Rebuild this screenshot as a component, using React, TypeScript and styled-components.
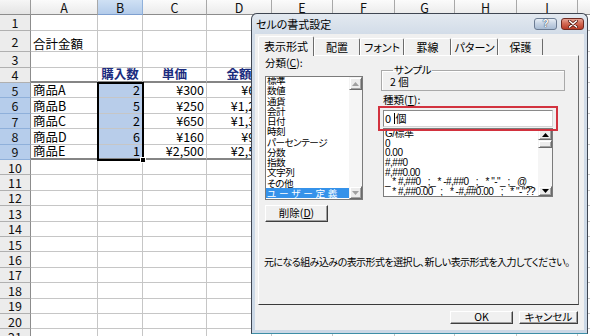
import React from 'react';
import styled, { createGlobalStyle } from 'styled-components';

const GlobalStyle = createGlobalStyle`
  html, body { margin: 0; padding: 0; background: #fff; }
  body { width: 590px; height: 336px; overflow: hidden; font-family: "Noto Sans CJK JP", "Noto Sans", sans-serif; }
`;

const Screen = styled.div`
  position: relative;
  width: 590px;
  height: 336px;
  overflow: hidden;
  background: #fff;
`;

/* ---------------- spreadsheet ---------------- */

const COLS = [31, 67, 45, 64, 65, 61, 62, 60, 62, 61, 60];
const LETTERS = ['A', 'B', 'C', 'D', 'E', 'F', 'G', 'H', 'I', 'J'];

const Sheet = styled.div`
  display: grid;
  grid-template-columns: ${COLS.map((c) => `${c}px`).join(' ')};
  grid-template-rows: 15.4px 15.4px 21.5px repeat(19, 15.4px);
  font-family: "Noto Sans CJK JP", sans-serif;
`;

const Corner = styled.div`
  grid-row: 1;
  grid-column: 1;
  box-sizing: border-box;
  border-right: 1px solid #9a9a9a;
  border-bottom: 1px solid #8c8c8c;
  background: linear-gradient(#f6f6f6, #e4e4e4);
`;

const ColHead = styled.div<{ $c: number; $active?: boolean }>`
  grid-row: 1;
  grid-column: ${(p) => p.$c + 1};
  box-sizing: border-box;
  display: flex;
  align-items: center;
  justify-content: center;
  border-right: 1px solid ${(p) => (p.$active ? '#8fb0da' : '#a8a8a8')};
  border-bottom: 1px solid ${(p) => (p.$active ? '#7e9fcf' : '#8c8c8c')};
  background: ${(p) => (p.$active ? 'linear-gradient(#cfe0f4, #b3cbea)' : 'linear-gradient(#fbfbfb, #ebebeb)')};
  font-size: 12.5px;
  line-height: 13px;
  color: #111;
`;

const RowHead = styled.div<{ $r: number; $active?: boolean }>`
  grid-row: ${(p) => p.$r + 1};
  grid-column: 1;
  box-sizing: border-box;
  display: flex;
  align-items: center;
  justify-content: center;
  border-right: 1px solid #8c8c8c;
  border-bottom: 1px solid ${(p) => (p.$active ? '#8fb0da' : '#b0b0b0')};
  background: ${(p) => (p.$active ? '#b6cdeb' : '#ececec')};
  font-size: 12.5px;
  line-height: 13px;
  color: #111;
`;

type Align = 'left' | 'right' | 'center';

const Cell = styled.div<{ $r: number; $c: number; $align?: Align; $head?: boolean; $fill?: boolean; $rule?: boolean }>`
  grid-row: ${(p) => p.$r + 1};
  grid-column: ${(p) => p.$c + 1};
  box-sizing: border-box;
  min-width: 0;
  display: flex;
  align-items: flex-end;
  justify-content: ${(p) => (p.$align === 'right' ? 'flex-end' : p.$align === 'center' ? 'center' : 'flex-start')};
  padding: 0 2px;
  border-right: 1px solid #c6c6c6;
  border-bottom: ${(p) => (p.$rule ? '2px solid #858585' : '1px solid #c6c6c6')};
  background: ${(p) => (p.$fill ? '#b8cdea' : '#fff')};
  font-size: 12.5px;
  line-height: 14px;
  white-space: nowrap;
  overflow: hidden;
  color: ${(p) => (p.$head ? '#1b2c7e' : '#000')};
  font-weight: ${(p) => (p.$head ? 700 : 400)};
`;

const Selection = styled.div`
  grid-row: 6 / 11;
  grid-column: 3;
  margin: -1px;
  border: 2px solid #000;
  position: relative;
  z-index: 1;
  pointer-events: none;
  &::after {
    content: '';
    position: absolute;
    right: -4px;
    bottom: -4px;
    width: 4px;
    height: 4px;
    background: #000;
    border: 1px solid #fff;
  }
`;

type CellData = { text: string; align?: Align; head?: boolean };

const DATA: Record<string, CellData> = {
  '2-1': { text: '合計金額' },
  '4-2': { text: '購入数', align: 'center', head: true },
  '4-3': { text: '単価', align: 'center', head: true },
  '4-4': { text: '金額', align: 'center', head: true },
};

const ROWS = [
  ['商品A', '2', '¥300', '¥600'],
  ['商品B', '5', '¥250', '¥1,250'],
  ['商品C', '2', '¥650', '¥1,300'],
  ['商品D', '6', '¥160', '¥960'],
  ['商品E', '1', '¥2,500', '¥2,500'],
];
ROWS.forEach((row, i) => {
  const r = 5 + i;
  DATA[`${r}-1`] = { text: row[0] };
  DATA[`${r}-2`] = { text: row[1], align: 'right' };
  DATA[`${r}-3`] = { text: row[2], align: 'right' };
  DATA[`${r}-4`] = { text: row[3], align: 'right' };
});

function Spreadsheet() {
  const cells: React.ReactNode[] = [];
  for (let r = 1; r <= 21; r++) {
    const activeRow = r >= 5 && r <= 9;
    cells.push(
      <RowHead key={`h${r}`} $r={r} $active={activeRow}>
        {r}
      </RowHead>
    );
    for (let c = 1; c <= 10; c++) {
      const d = DATA[`${r}-${c}`];
      cells.push(
        <Cell
          key={`${r}-${c}`}
          $r={r}
          $c={c}
          $align={d?.align}
          $head={d?.head}
          $fill={c === 2 && activeRow}
          $rule={(r === 4 || r === 9) && c <= 4}
        >
          {d?.text}
        </Cell>
      );
    }
  }
  return (
    <Sheet>
      <Corner />
      {LETTERS.map((l, i) => (
        <ColHead key={l} $c={i + 1} $active={l === 'B'}>
          {l}
        </ColHead>
      ))}
      {cells}
      <Selection />
    </Sheet>
  );
}

/* ---------------- dialog ---------------- */

const Dialog = styled.section`
  position: absolute;
  left: 251px;
  top: 13px;
  width: 337px;
  height: 321px;
  box-sizing: border-box;
  border: 1px solid #3f4652;
  border-bottom-color: #3d8ea6;
  border-radius: 6px 6px 0 0;
  background: linear-gradient(#e3e9f0 0, #d2dce8 20px, #cbd8e6 100%);
  display: flex;
  flex-direction: column;
  font-family: "Noto Sans CJK JP", sans-serif;
  font-feature-settings: "palt";
  color: #000;
  z-index: 5;
`;

const TitleBar = styled.header`
  height: 20px;
  flex: none;
  display: flex;
  align-items: flex-start;
  padding: 0 3px 0 4px;
`;

const Title = styled.h1`
  margin: 0;
  font-size: 11px;
  font-weight: 400;
  line-height: 20px;
  color: #000;
`;

const CaptionButtons = styled.div`
  margin-left: auto;
  margin-top: 4px;
  display: flex;
  gap: 4px;
`;

const CaptionButton = styled.div<{ $close?: boolean }>`
  width: 23px;
  height: 12px;
  box-sizing: border-box;
  border: 1px solid ${(p) => (p.$close ? '#6e2a22' : '#6c7c93')};
  border-radius: 3px;
  background: ${(p) =>
    p.$close ? 'linear-gradient(#e7a293, #d26a55 45%, #b83a26)' : 'linear-gradient(#e9eff6, #c7d4e4 45%, #a9bcd4)'};
  display: flex;
  align-items: center;
  justify-content: center;
  font-family: "Liberation Sans", sans-serif;
  font-weight: 700;
  font-size: 10px;
  line-height: 1;
  color: #fff;
  text-shadow: 0 0 1px #2b3a55, 0 0 1px #2b3a55;
`;

const Body = styled.div`
  flex: 1;
  margin: 0 3px 3px;
  background: #f0f0f0;
  padding: 3px 5px 0 3px;
  display: flex;
  flex-direction: column;
`;

const TabStrip = styled.div`
  height: 18px;
  display: flex;
  align-items: flex-end;
  position: relative;
  z-index: 2;
`;

const Tab = styled.div<{ $w: number; $active?: boolean }>`
  width: ${(p) => p.$w}px;
  height: ${(p) => (p.$active ? 20 : 17)}px;
  margin-bottom: ${(p) => (p.$active ? -1 : 0)}px;
  box-sizing: border-box;
  border-style: solid;
  border-width: 1px 1px 0 1px;
  border-color: #fff #6b6b6b transparent #fff;
  border-radius: 2px 2px 0 0;
  background: #f0f0f0;
  display: flex;
  align-items: center;
  justify-content: center;
  font-size: 11px;
  line-height: 1;
  white-space: nowrap;
`;

const Panel = styled.div`
  height: 250px;
  box-sizing: border-box;
  border-style: solid;
  border-width: 1px;
  border-color: #fff #6b6b6b #3a3a3a #fff;
  padding: 0 12px 0 6px;
  display: flex;
  flex-direction: column;
`;

const TopArea = styled.div`
  display: flex;
  gap: 18px;
`;

const LeftCol = styled.div`
  width: 98px;
  display: flex;
  flex-direction: column;
  align-items: flex-start;
`;

const RightCol = styled.div`
  width: 184px;
  display: flex;
  flex-direction: column;
  align-items: flex-start;
`;

const FieldLabel = styled.div<{ $mt: number; $ml?: number }>`
  margin-top: ${(p) => p.$mt}px;
  margin-left: ${(p) => p.$ml ?? 0}px;
  font-size: 10.5px;
  line-height: 12px;
  height: 12px;
  white-space: nowrap;
  u { text-decoration: underline; text-underline-offset: 1px; }
`;

const ListBox = styled.div<{ $w: number; $h: number; $mt: number; $ml?: number }>`
  width: ${(p) => p.$w}px;
  height: ${(p) => p.$h}px;
  margin-top: ${(p) => p.$mt}px;
  margin-left: ${(p) => p.$ml ?? 0}px;
  box-sizing: border-box;
  border: 1px solid #7b7b7b;
  background: #fff;
  display: flex;
  overflow: hidden;
`;

const ListItems = styled.ul<{ $shift: number; $latin?: boolean }>`
  flex: 1;
  min-width: 0;
  margin: ${(p) => p.$shift}px 0 0;
  padding: 0;
  list-style: none;
  overflow: hidden;
  font-family: ${(p) => (p.$latin ? '"Liberation Sans", "Noto Sans CJK JP", sans-serif' : '"Noto Sans CJK JP", sans-serif')};
`;

const ListItem = styled.li<{ $lh: number; $sel?: boolean; $ls?: number; $latin?: boolean }>`
  height: ${(p) => p.$lh}px;
  line-height: ${(p) => p.$lh}px;
  padding-left: 1px;
  font-size: ${(p) => (p.$latin ? 10 : 9.6)}px;
  letter-spacing: ${(p) => p.$ls ?? (p.$latin ? -0.5 : -0.5)}px;
  white-space: nowrap;
  overflow: visible;
  background: ${(p) => (p.$sel ? '#3592ea' : 'transparent')};
  color: ${(p) => (p.$sel ? '#fff' : '#000')};
`;

const VScroll = styled.div<{ $w: number }>`
  width: ${(p) => p.$w}px;
  flex: none;
  display: flex;
  flex-direction: column;
  background: #f5f5f5;
`;

const ScrollPart = styled.div<{ $h: number }>`
  height: ${(p) => p.$h}px;
  flex: none;
  box-sizing: border-box;
  border: 1px solid;
  border-color: #f4f4f4 #6b6b6b #6b6b6b #f4f4f4;
  box-shadow: inset 1px 1px #fff, inset -1px -1px #a3a3a3;
  background: #ececec;
  display: flex;
  align-items: center;
  justify-content: center;
`;

const Track = styled.div`
  flex: 1;
`;

const Arrow = ({ down, dim }: { down?: boolean; dim?: boolean }) => (
  <svg width="7" height="4" viewBox="0 0 7 4">
    <polygon points={down ? '0,0 7,0 3.5,4' : '0,4 7,4 3.5,0'} fill={dim ? '#a0a0a0' : '#000'} />
  </svg>
);

const PushButton = styled.div<{ $w: number; $h: number; $mt?: number }>`
  width: ${(p) => p.$w}px;
  height: ${(p) => p.$h}px;
  margin-top: ${(p) => p.$mt ?? 0}px;
  box-sizing: border-box;
  border: 1px solid;
  border-color: #fff #3f3f3f #3f3f3f #fff;
  box-shadow: inset -1px -1px #a0a0a0;
  background: #f0f0f0;
  display: flex;
  align-items: center;
  justify-content: center;
  font-size: 10.5px;
  line-height: 1;
  white-space: nowrap;
  u { text-decoration: underline; text-underline-offset: 1px; }
`;

const GroupBox = styled.fieldset`
  margin: 8px 0 0;
  width: 184px;
  box-sizing: border-box;
  padding: 0 0 3px 8px;
  border: 1px solid #a9a9a9;
  box-shadow: inset 1px 1px #fff;
  min-width: 0;
`;

const GroupLegend = styled.legend`
  margin-left: 3px;
  padding: 0 1px;
  font-size: 10.5px;
  line-height: 12px;
  letter-spacing: -0.3px;
`;

const GroupValue = styled.div`
  font-size: 10.5px;
  line-height: 11px;
  height: 11px;
  white-space: pre;
`;

const Highlight = styled.div`
  position: relative;
  z-index: 3;
  margin-left: -3px;
  width: 180px;
  box-sizing: border-box;
  border: 2px solid #d2323e;
  padding: 2px 3px;
`;

const TextInput = styled.div`
  height: 17px;
  box-sizing: border-box;
  border: 1px solid #8a8a8a;
  border-bottom-color: #d6d6d6;
  border-right-color: #d6d6d6;
  background: #fff;
  display: flex;
  align-items: center;
  padding-left: 1px;
  font-size: 11px;
  line-height: 1;
  white-space: pre;
`;

const Caret = styled.span`
  display: inline-block;
  width: 1px;
  height: 11px;
  background: #000;
  margin-right: 1px;
`;

const Description = styled.p`
  margin: 33px 0 0 -1px;
  font-size: 10px;
  line-height: 14px;
  letter-spacing: -0.55px;
  white-space: nowrap;
`;

const Footer = styled.div`
  display: flex;
  justify-content: flex-end;
  gap: 6px;
  padding: 6px 1px 0 0;
`;

const CATEGORIES = ['標準', '数値', '通貨', '会計', '日付', '時刻', 'パーセンテージ', '分数', '指数', '文字列', 'その他', 'ユーザー定義'];
const FORMATS = [
  'G/標準',
  '0',
  '0.00',
  '#,##0',
  '#,##0.00',
  '_ * #,##0_ ;_ * -#,##0_ ;_ * "-"_ ;_ @_',
  '_ * #,##0.00_ ;_ * -#,##0.00_ ;_ * "-"??_ ;_ @_',
];
const TABS: { label: string; w: number }[] = [
  { label: '表示形式', w: 56 },
  { label: '配置', w: 46 },
  { label: 'フォント', w: 44 },
  { label: '罫線', w: 47 },
  { label: 'パターン', w: 47 },
  { label: '保護', w: 45 },
];

function FormatDialog() {
  return (
    <Dialog>
      <TitleBar>
        <Title>セルの書式設定</Title>
        <CaptionButtons>
          <CaptionButton>?</CaptionButton>
          <CaptionButton $close>
            <svg width="10" height="8" viewBox="0 0 10 8">
              <path d="M1.5 1 L8.5 7 M8.5 1 L1.5 7" stroke="#5a1a12" strokeWidth="3" strokeLinecap="round" />
              <path d="M1.5 1 L8.5 7 M8.5 1 L1.5 7" stroke="#fff" strokeWidth="1.6" strokeLinecap="round" />
            </svg>
          </CaptionButton>
        </CaptionButtons>
      </TitleBar>
      <Body>
        <TabStrip>
          {TABS.map((t, i) => (
            <Tab key={t.label} $w={t.w} $active={i === 0}>
              {t.label}
            </Tab>
          ))}
        </TabStrip>
        <Panel>
          <TopArea>
            <LeftCol>
              <FieldLabel $mt={1}>
                分類(<u>C</u>):
              </FieldLabel>
              <ListBox $w={98} $h={124} $mt={7}>
                <ListItems $shift={-2}>
                  {CATEGORIES.map((c, i) => (
                    <ListItem key={c} $lh={10.25} $sel={i === CATEGORIES.length - 1} $ls={i === CATEGORIES.length - 1 ? 2.8 : undefined}>
                      {c}
                    </ListItem>
                  ))}
                </ListItems>
                <VScroll $w={13}>
                  <ScrollPart $h={13}>
                    <Arrow dim />
                  </ScrollPart>
                  <Track />
                  <ScrollPart $h={13}>
                    <Arrow down dim />
                  </ScrollPart>
                </VScroll>
              </ListBox>
              <PushButton $w={63} $h={17} $mt={5}>
                削除(<u>D</u>)
              </PushButton>
            </LeftCol>
            <RightCol>
              <GroupBox>
                <GroupLegend>サンプル</GroupLegend>
                <GroupValue>2 個</GroupValue>
              </GroupBox>
              <FieldLabel $mt={3} $ml={2}>
                種類(<u>T</u>):
              </FieldLabel>
              <Highlight>
                <TextInput>
                  0 <Caret />個
                </TextInput>
              </Highlight>
              <ListBox $w={170} $h={69} $mt={-3} $ml={2}>
                <ListItems $shift={0} $latin>
                  {FORMATS.map((f) => (
                    <ListItem key={f} $lh={9.7} $latin>
                      {f}
                    </ListItem>
                  ))}
                </ListItems>
                <VScroll $w={14}>
                  <ScrollPart $h={11}>
                    <Arrow />
                  </ScrollPart>
                  <ScrollPart $h={8} />
                  <Track />
                  <ScrollPart $h={10}>
                    <Arrow down />
                  </ScrollPart>
                </VScroll>
              </ListBox>
            </RightCol>
          </TopArea>
          <Description>元になる組み込みの表示形式を選択し、新しい表示形式を入力してください。</Description>
        </Panel>
        <Footer>
          <PushButton $w={63} $h={13}>
            OK
          </PushButton>
          <PushButton $w={59} $h={13}>
            キャンセル
          </PushButton>
        </Footer>
      </Body>
    </Dialog>
  );
}

export default function App() {
  return (
    <>
      <GlobalStyle />
      <Screen>
        <Spreadsheet />
        <FormatDialog />
      </Screen>
    </>
  );
}
